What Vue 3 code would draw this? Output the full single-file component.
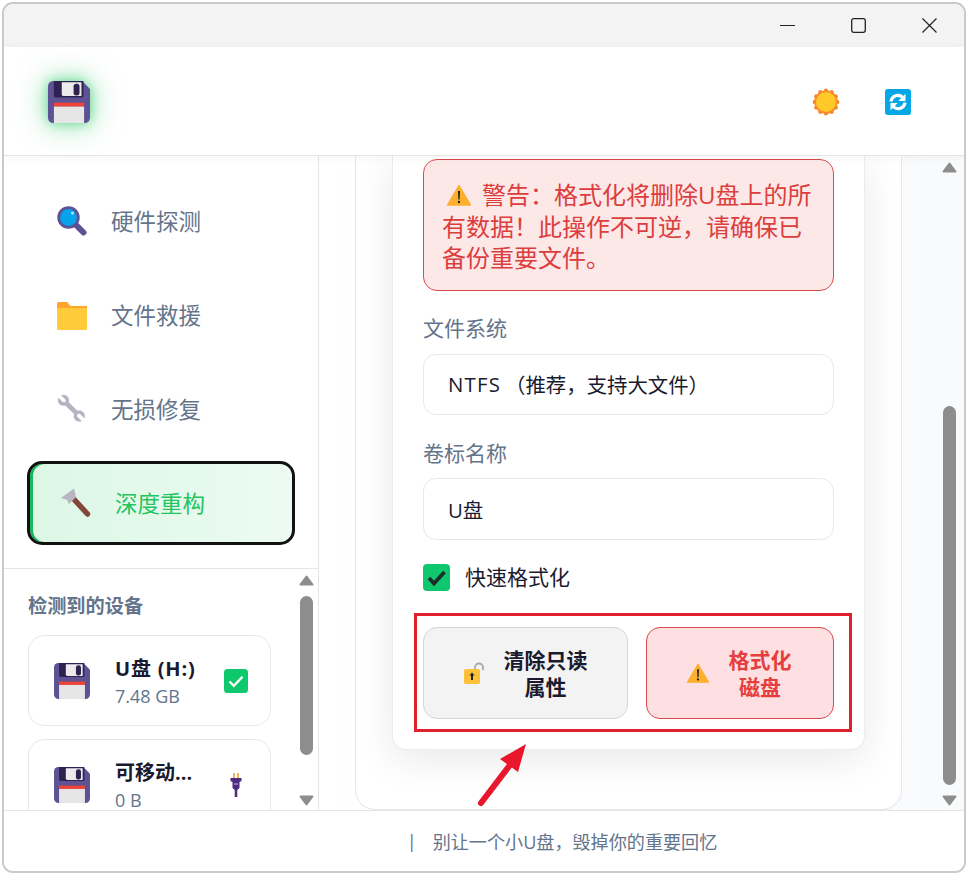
<template>
  <div class="screen">
    <svg class="defs" width="0" height="0" aria-hidden="true">
      <defs>
        <symbol id="floppy" viewBox="0 0 64 64">
          <path d="M8 0H52L64 12V56a8 8 0 0 1-8 8H8a8 8 0 0 1-8-8V8a8 8 0 0 1 8-8z" fill="#5c5294" />
          <path d="M9 0H54V22a3 3 0 0 1-3 3H12a3 3 0 0 1-3-3z" fill="#2f2150" />
          <path d="M21 2H51V23H24a3 3 0 0 1-3-3z" fill="#ebebeb" />
          <rect x="39" y="4" width="9" height="18" rx="4" fill="#2f2150" />
          <rect x="9" y="33" width="46" height="6" fill="#f04438" />
          <path d="M9 39H55V64H9z" fill="#e6e6e6" />
        </symbol>
        <symbol id="warn" viewBox="0 0 24 24">
          <path d="M12 2.5 23.5 22H.5z" fill="#fdb02f" stroke="#fdb02f" stroke-width="1.4" stroke-linejoin="round" />
          <path d="M11 8h2l-.4 8.5h-1.2z" fill="#1c1c1c" />
          <circle cx="12" cy="19" r="1.2" fill="#1c1c1c" />
        </symbol>
        <symbol id="tri-up" viewBox="0 0 15 11">
          <path d="M7.5 1.500 13.500 9.500H1.500z" fill="#8d8d8d" stroke="#8d8d8d" stroke-width="2" stroke-linejoin="round" />
        </symbol>
        <symbol id="tri-down" viewBox="0 0 15 11">
          <path d="M7.500 9.500 13.500 1.500H1.500z" fill="#8d8d8d" stroke="#8d8d8d" stroke-width="2" stroke-linejoin="round" />
        </symbol>
      </defs>
    </svg>

    <div class="window">
      <div class="titlebar">
        <svg class="win-btn" width="15" height="15" viewBox="0 0 15 15"><path d="M0 7.5h15" stroke="#222" stroke-width="1.2" /></svg>
        <svg class="win-btn" width="15" height="15" viewBox="0 0 15 15"><rect x=".7" y=".7" width="13.6" height="13.6" rx="2" fill="none" stroke="#222" stroke-width="1.3" /></svg>
        <svg class="win-btn" width="15" height="15" viewBox="0 0 15 15"><path d="M.5.5l14 14M14.5.5l-14 14" stroke="#222" stroke-width="1.2" /></svg>
      </div>

      <header class="header">
        <svg class="logo" width="42" height="42"><use href="#floppy" /></svg>
        <div class="header-actions">
          <svg width="28" height="28" viewBox="0 0 28 28">
            <circle v-for="a in sunAngles" :key="a" :cx="14 + 11.2 * Math.cos(a)" :cy="14 + 11.2 * Math.sin(a)" r="2.2" fill="#f98a2c" />
            <circle cx="14" cy="14" r="11.6" fill="#f98a2c" />
            <circle cx="14" cy="14" r="10" fill="#ffc928" />
          </svg>
          <svg width="26" height="26" viewBox="0 0 26 26">
            <rect width="26" height="26" rx="3" fill="#03a7e6" />
            <path d="M6 12.500a7 7 0 0 1 11.800-4.200" fill="none" stroke="#fff" stroke-width="3.200" />
            <path d="M20.500 4.800v7.200h-7.200z" fill="#fff" />
            <path d="M20 13.500a7 7 0 0 1-11.800 4.200" fill="none" stroke="#fff" stroke-width="3.200" />
            <path d="M5.500 21.200v-7.200h7.200z" fill="#fff" />
          </svg>
        </div>
      </header>

      <div class="body">
        <aside class="sidebar">
          <nav class="nav">
            <div v-for="item in navItems" :key="item.label" class="nav-item" :class="{ active: item.active }">
              <svg v-if="item.icon === 'search'" class="nav-icon" viewBox="0 0 30 30">
                <path d="M19 19l7.5 7.5" stroke="#5c5294" stroke-width="6" stroke-linecap="round" />
                <circle cx="11.5" cy="11.5" r="9.8" fill="#05a3ec" stroke="#5c5294" stroke-width="2.8" />
                <circle cx="15.5" cy="7" r="1.5" fill="#b5e6fb" />
              </svg>
              <svg v-else-if="item.icon === 'folder'" class="nav-icon" viewBox="0 -1 30 30">
                <path d="M0 2.5A1.5 1.5 0 0 1 1.500 1h8.500l3.500 4H30v5H0z" fill="#ffa52e" />
                <path d="M0 7h28.800a1.200 1.200 0 0 1 1.200 1.200V27.500a1.500 1.500 0 0 1-1.500 1.500h-27A1.500 1.500 0 0 1 0 27.500z" fill="#ffcb3b" />
              </svg>
              <svg v-else-if="item.icon === 'wrench'" class="nav-icon" viewBox="0 0 30 30" fill="#b6b3c2">
                <path d="M1.500 3.800 6 8.300l2.400-.2.300-2.300L4 1.300C7.600-.4 12 2 12 6c0 .9-.2 1.500-.4 2l8.800 8.800c.6-.2 1.300-.4 2-.4 4.200 0 6.600 4.300 5 7.900l-4.700-4.500-2.400.3-.2 2.300 4.700 4.500c-3.700 1.700-8.100-.7-8.100-5 0-.7.100-1.400.3-2L8.200 11.400c-.6.200-1.200.3-1.900.3-4.200 0-6.600-4.300-4.800-7.900z" />
              </svg>
              <svg v-else class="nav-icon" viewBox="0 0 30 30">
                <path d="M10 8 26.500 26" stroke="#82473a" stroke-width="5.500" stroke-linecap="round" />
                <path d="M0 10 13 .5 15 9 8 16 6 12z" fill="#b9b6c4" />
              </svg>
              <span class="nav-label">{{ item.label }}</span>
            </div>
          </nav>

          <section class="devices">
            <div class="device-list">
              <h3 class="device-title">检测到的设备</h3>
              <div v-for="d in devices" :key="d.name" class="device-card">
                <svg class="device-icon" width="36" height="36"><use href="#floppy" /></svg>
                <div class="device-text">
                  <div class="device-name">{{ d.name }}</div>
                  <div class="device-size">{{ d.size }}</div>
                </div>
                <svg v-if="d.status === 'check'" class="device-status" width="24" height="24" viewBox="0 0 24 24">
                  <rect width="24" height="24" rx="3.500" fill="#0fc76c" />
                  <path d="M5.500 12.500l4.300 4.300 8.700-9" fill="none" stroke="#fff" stroke-width="2.300" />
                </svg>
                <svg v-else class="device-status" width="24" height="24" viewBox="0 0 24 24">
                  <path d="M10 0v6M14 0v6" stroke="#e8a33d" stroke-width="1.600" />
                  <path d="M6.500 5h11v3l-2 1v6l-2.200 2v7h-2.600v-7L8.500 15V9l-2-1z" fill="#4f2b80" />
                  <path d="M10 11h4" stroke="#b49bd6" stroke-width="1.200" />
                </svg>
              </div>
            </div>
            <div class="scrollbar side-scroll">
              <svg class="tri" width="15" height="11"><use href="#tri-up" /></svg>
              <i class="thumb" />
              <svg class="tri tri-end" width="15" height="11"><use href="#tri-down" /></svg>
            </div>
          </section>
        </aside>

        <main class="main">
          <div class="panel">
            <div class="card">
              <div class="alert">
                <svg class="alert-icon" width="24" height="24"><use href="#warn" /></svg>警告：格式化将删除U盘上的所有数据！此操作不可逆，请确保已备份重要文件。
              </div>

              <label class="field-label">文件系统</label>
              <div class="input first"><span class="latin">NTFS</span>（推荐，支持大文件）</div>

              <label class="field-label second">卷标名称</label>
              <div class="input tall">U盘</div>

              <div class="check-row">
                <span class="checkbox">
                  <svg width="27" height="27" viewBox="0 0 27 27">
                    <path d="M6 14l5 5.500L21.500 8" fill="none" stroke="#1f2d2a" stroke-width="3.800" />
                  </svg>
                </span>
                <span>快速格式化</span>
              </div>

              <div class="actions">
                <button class="btn neutral" type="button">
                  <svg width="20" height="22" viewBox="0 0 20 22">
                    <path d="M11 8V5.500a4 4 0 0 1 8 0V8" fill="none" stroke="#a8a8ad" stroke-width="1.800" />
                    <rect y="7" width="16" height="15" rx="2" fill="#fdc13a" />
                    <path d="M8 10.500l2.600 3H9V18H7v-4.500H5.400z" fill="#26221e" />
                  </svg>
                  <span class="btn-text wide">清除只读属性</span>
                </button>
                <button class="btn danger" type="button">
                  <svg width="22" height="22"><use href="#warn" /></svg>
                  <span class="btn-text">格式化磁盘</span>
                </button>
              </div>
            </div>
          </div>
          <div class="scrollbar main-scroll">
            <svg class="tri" width="15" height="11"><use href="#tri-up" /></svg>
            <i class="thumb" />
            <svg class="tri tri-end" width="15" height="11"><use href="#tri-down" /></svg>
          </div>
        </main>
      </div>

      <footer class="footer">
        <span class="footer-sep">|</span>
        <span>别让一个小U盘，毁掉你的重要回忆</span>
      </footer>
    </div>

    <div class="highlight" />
    <svg class="pointer" width="56" height="68" viewBox="0 0 56 68">
      <path d="M4 63 36 21" stroke="#e8172b" stroke-width="6" stroke-linecap="round" />
      <path d="M49 4 23 19l18 13z" fill="#e8172b" />
    </svg>
  </div>
</template>

<script setup>
const sunAngles = Array.from({ length: 12 }, (_, i) => (i * Math.PI) / 6)

const navItems = [
  { label: '硬件探测', icon: 'search' },
  { label: '文件救援', icon: 'folder' },
  { label: '无损修复', icon: 'wrench' },
  { label: '深度重构', icon: 'hammer', active: true }
]

const devices = [
  { name: 'U盘 (H:)', size: '7.48 GB', status: 'check' },
  { name: '可移动...', size: '0 B', status: 'plug' }
]
</script>

<style>
html,
body {
  margin: 0;
  background: #fff;
}
</style>

<style scoped>
.screen {
  position: relative;
  width: 967px;
  height: 875px;
  padding: 2px 1px 2px 2px;
  box-sizing: border-box;
  font-family: "Open Sans", "Noto Sans CJK SC", sans-serif;
  color: #1a1a2e;
  overflow: hidden;
  text-spacing-trim: space-all;
}
.defs {
  position: absolute;
}
.window {
  height: 100%;
  box-sizing: border-box;
  display: flex;
  flex-direction: column;
  border: 2px solid #c9c9c9;
  border-radius: 11px;
  overflow: hidden;
  background: #fff;
}
.titlebar {
  flex: none;
  height: 43px;
  background: #f3f3f3;
  display: flex;
  align-items: center;
  justify-content: flex-end;
  gap: 56px;
  padding-right: 27px;
}
.header {
  flex: none;
  height: 108px;
  box-sizing: content-box;
  border-bottom: 1px solid #e5e5e5;
  display: flex;
  align-items: center;
  justify-content: space-between;
  padding: 0 53px 0 44px;
  position: relative;
  z-index: 2;
  background: #fff;
  box-shadow: 0 2px 10px rgba(0, 0, 0, 0.04);
}
.logo {
  position: relative;
  top: 1px;
  filter: drop-shadow(0 0 6px rgba(34, 197, 94, 0.55)) drop-shadow(0 0 14px rgba(34, 197, 94, 0.5));
}
.header-actions {
  position: relative;
  top: 1px;
  display: flex;
  align-items: center;
  gap: 45px;
}
.body {
  flex: 1;
  min-height: 0;
  display: flex;
}
.sidebar {
  flex: none;
  width: 315px;
  box-sizing: border-box;
  border-right: 1px solid #e5e5e5;
  display: flex;
  flex-direction: column;
}
.nav {
  flex: none;
  padding: 23px 24px 23px 24px;
  display: flex;
  flex-direction: column;
  gap: 10px;
  border-bottom: 1px solid #e5e5e5;
}
.nav-item {
  height: 84px;
  box-sizing: border-box;
  width: 267px;
  display: flex;
  align-items: center;
  gap: 24px;
  padding-left: 29px;
  font-size: 22.500px;
  color: #64748b;
}
.nav-label {
  margin-top: -1px;
}
.nav-item.active {
  position: relative;
  width: 268px;
  margin-left: -1px;
  border: 3px solid #111;
  border-radius: 15px;
  padding-left: 31px;
  color: #22c55e;
  background: linear-gradient(90deg, #dcf7e6, #ecfbf2);
  box-shadow: inset 3px 0 0 #16b85c;
}
.nav-icon {
  width: 30px;
  height: 30px;
  flex: none;
}
.devices {
  flex: 1;
  min-height: 0;
  display: flex;
  overflow: hidden;
}
.device-list {
  flex: 1;
  min-width: 0;
  padding: 25px 0 0 24px;
}
.device-title {
  margin: 0 0 18px;
  font-size: 19.200px;
  line-height: 23px;
  font-weight: 700;
  color: #64748b;
  white-space: nowrap;
}
.device-card {
  width: 243px;
  height: 91px;
  box-sizing: border-box;
  border: 1px solid #e8e8ec;
  border-radius: 16px;
  display: flex;
  align-items: center;
  padding: 0 22px 0 25px;
  margin-bottom: 13px;
  background: #fff;
}
.device-icon {
  flex: none;
  margin-right: 25px;
}
.device-text {
  flex: 1;
  min-width: 0;
}
.device-name {
  font-size: 20px;
  line-height: 27px;
  font-weight: 700;
  white-space: nowrap;
}
.device-card:first-of-type .device-name {
  letter-spacing: 0.8px;
}
.device-size {
  font-size: 18px;
  line-height: 25px;
  margin-top: 2px;
  margin-bottom: -2px;
  color: #64748b;
}
.device-status {
  flex: none;
}
.scrollbar {
  flex: none;
  width: 15px;
  display: flex;
  flex-direction: column;
  align-items: center;
}
.tri {
  display: block;
  flex: none;
}
.side-scroll {
  margin-right: 4px;
  padding-top: 6px;
}
.side-scroll .thumb {
  margin-top: 10px;
  height: 159px;
}
.side-scroll .tri-end {
  margin-top: 40px;
}
.main-scroll {
  margin-left: 40px;
  padding-top: 6px;
}
.main-scroll .thumb {
  margin-top: 233px;
  height: 379px;
}
.main-scroll .tri-end {
  margin-top: 10px;
}
.thumb {
  display: block;
  flex: none;
  width: 13px;
  background: #8d8d8d;
  border-radius: 7px;
}
.main {
  flex: 1;
  min-width: 0;
  display: flex;
  padding-left: 36px;
  background: linear-gradient(90deg, #fff, #f8fafc);
}
.panel {
  flex: none;
  width: 547px;
  box-sizing: border-box;
  border: 1px solid #e6e8ec;
  border-top: 0;
  border-radius: 0 0 20px 20px;
  padding: 0 36px 0;
  background: #fff;
  overflow: hidden;
}
.card {
  width: 473px;
  box-sizing: border-box;
  padding: 3px 30px 30px;
  background: #fff;
  border: 1px solid #ececf0;
  border-top: 0;
  border-radius: 0 0 14px 14px;
  box-shadow: 0 10px 40px rgba(0, 0, 0, 0.09);
}
.alert {
  height: 132px;
  box-sizing: border-box;
  border: 1px solid #dc4a4a;
  border-radius: 14px;
  background: #fde8e8;
  color: #dc3d3d;
  font-size: 24px;
  line-height: 31.500px;
  padding: 19px 18px 0 18px;
}
.alert-icon {
  vertical-align: -3px;
  margin: 0 11px 0 5px;
}
.field-label {
  display: block;
  margin-top: 24px;
  font-size: 21px;
  line-height: 26px;
  color: #64748b;
}
.field-label.second {
  margin-top: 25px;
}
.input {
  margin-top: 13px;
  height: 61px;
  box-sizing: border-box;
  border: 1px solid #e6e8ec;
  border-radius: 13px;
  display: flex;
  align-items: center;
  padding-left: 24px;
  font-size: 20.400px;
}
.input.first {
  padding-bottom: 2px;
}
.latin {
  letter-spacing: 1.2px;
  margin-right: 4px;
}
.input.tall {
  margin-top: 12px;
  height: 62px;
}
.check-row {
  margin-top: 24px;
  display: flex;
  align-items: center;
  gap: 15px;
  font-size: 21px;
  line-height: 27px;
}
.checkbox {
  width: 27px;
  height: 27px;
  border-radius: 4px;
  background: #0fc76c;
  display: block;
}
.checkbox svg {
  display: block;
}
.actions {
  margin-top: 36px;
  display: flex;
  gap: 18px;
}
.btn {
  height: 92px;
  box-sizing: border-box;
  border-radius: 14px;
  display: flex;
  align-items: center;
  justify-content: center;
  gap: 20px;
  padding: 2px 0 0;
  font-family: inherit;
  font-size: 21px;
  line-height: 27px;
  font-weight: 700;
  cursor: pointer;
}
.btn svg {
  margin-top: -2px;
}
.btn.neutral {
  width: 205px;
  flex: none;
  background: #f3f3f3;
  border: 1px solid #d6d6d6;
  color: #1a1a2e;
}
.btn.danger {
  width: 188px;
  flex: none;
  padding-right: 2px;
  background: #ffe0e2;
  border: 1px solid #dc4a4a;
  color: #e53e3e;
}
.btn-text {
  width: 63px;
  text-align: center;
}
.btn-text.wide {
  width: 84px;
}
.footer {
  flex: none;
  height: 61px;
  box-sizing: border-box;
  border-top: 1px solid #e5e5e5;
  display: flex;
  align-items: center;
  justify-content: center;
  gap: 16px;
  padding-left: 156px;
  font-size: 18.100px;
  color: #64748b;
  background: #fff;
}
.highlight {
  position: absolute;
  left: 414px;
  top: 613px;
  width: 438px;
  height: 119px;
  box-sizing: border-box;
  border: 3px solid #e0202c;
}
.pointer {
  position: absolute;
  left: 477px;
  top: 740px;
}
</style>
